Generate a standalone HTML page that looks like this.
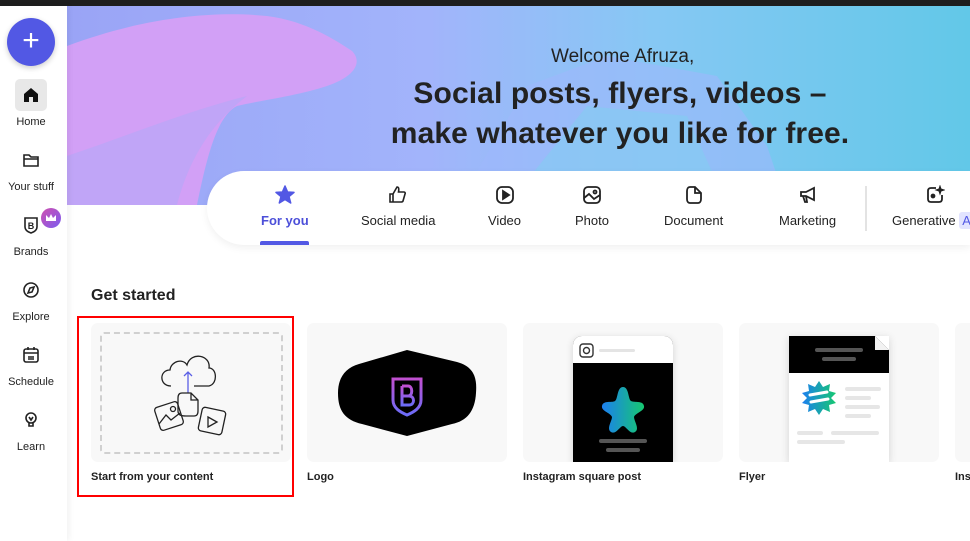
<!DOCTYPE html>
<html><head><meta charset="utf-8"><style>
*{margin:0;padding:0;box-sizing:border-box}
body{width:970px;height:541px;overflow:hidden;background:#fff;font-family:"Liberation Sans",sans-serif;color:#222;position:relative}
.top{position:absolute;left:0;top:0;width:970px;height:6px;background:#1e1e1e}
.side{position:absolute;left:0;top:6px;width:67px;height:535px;background:#fff;box-shadow:2px 0 6px rgba(0,0,0,.06);z-index:3}
.plus{position:absolute;left:7px;top:12px;width:48px;height:48px;border-radius:50%;background:#5258e4;color:#fff;font-size:30px;text-align:center;line-height:46px;box-shadow:0 2px 6px rgba(0,0,0,.2)}
.nav{position:absolute;left:0;width:62px;text-align:center;font-size:11px;color:#222}
.nav svg{display:block;margin:0 auto 12px}
.banner{position:absolute;left:67px;top:6px;width:903px;height:199px;overflow:hidden;background:linear-gradient(90deg,#9aa4f6 0%,#a2b4fb 40%,#86c8f4 65%,#62c8e8 100%)}
.tabs{position:absolute;left:207px;top:171px;width:763px;height:74px;background:#fff;border-radius:37px 0 0 37px;box-shadow:0 3px 8px rgba(0,0,0,.06);z-index:2}
.tab{position:absolute;top:14px;text-align:center;font-size:13px;color:#222;white-space:nowrap}
.tab svg{display:block;margin:0 auto 8px}
h2{position:absolute;left:91px;top:287px;font-size:16px;font-weight:bold;color:#222}
.card{position:absolute;top:323px;width:200px;height:139px;background:#f8f8f8;border-radius:7px;overflow:hidden}
.lab{position:absolute;top:471px;font-size:11px;font-weight:bold;color:#222}
</style></head><body>
<div class="top"></div>
<div class="banner">
<svg width="903" height="199" style="position:absolute;left:0;top:0">
<path d="M0 40 C80 10 150 5 200 10 C240 15 270 35 285 45 C295 55 290 70 260 80 C230 90 190 95 170 100 C150 110 140 150 130 199 L0 199 Z" fill="#d2a0f6"/>
<path d="M0 150 C60 130 120 105 180 90 C140 120 120 160 110 199 L0 199Z" fill="#b8a6f8" opacity=".7"/>
<path d="M390 199 L460 80 L540 50 L650 70 L700 140 L720 199Z" fill="#9fb8fb" opacity=".6"/>
<path d="M440 199 L520 100 L620 110 L660 199Z" fill="#7fd0ef" opacity=".5"/>
</svg>
<div style="position:absolute;left:484px;top:40px;font-size:19px;color:#222">Welcome Afruza,</div>
<div style="position:absolute;left:0;width:903px;padding-left:203px;top:68px;text-align:center;font-size:30px;font-weight:bold;line-height:40px;color:#222;letter-spacing:0.1px">Social posts, flyers, videos –<br>make whatever you like for free.</div>
</div>
<div class="side">
<div class="plus">+</div>
<div style="position:absolute;left:15px;top:73px;width:32px;height:32px;border-radius:5px;background:#e8e8e8"></div>
<div class="nav" style="top:80px"><svg width="18" height="18" viewBox="0 0 18 18"><path d="M2 8 L9 2 L16 8 V16 H11 V11 H7 V16 H2Z" fill="#111"/></svg><span>Home</span></div>
<div class="nav" style="top:145px"><svg width="18" height="18" viewBox="0 0 18 18" fill="none" stroke="#222" stroke-width="1.6"><path d="M2 4 H7 L9 6 H16 V15 H2Z M2 8 H16"/></svg><span>Your stuff</span></div>
<div class="nav" style="top:210px"><svg width="18" height="18" viewBox="0 0 18 18" fill="none" stroke="#222" stroke-width="1.6"><path d="M3 2 H15 V11 C15 14 12 16 9 17 C6 16 3 14 3 11Z"/><text x="9" y="13" font-size="9" text-anchor="middle" fill="#222" stroke="none" font-weight="bold">B</text></svg><span>Brands</span></div>
<div style="position:absolute;left:41px;top:202px;width:20px;height:20px;border-radius:50%;background:linear-gradient(135deg,#d04fb0,#7b5cf0);"><svg width="20" height="20"><path d="M5 13 L5 7 L8 10 L10 6 L12 10 L15 7 L15 13Z" fill="#fff"/></svg></div>
<div class="nav" style="top:275px"><svg width="18" height="18" viewBox="0 0 18 18" fill="none" stroke="#222" stroke-width="1.6"><circle cx="9" cy="9" r="7"/><path d="M6 12 L8 7 L12 6 L10 11Z"/></svg><span>Explore</span></div>
<div class="nav" style="top:340px"><svg width="18" height="18" viewBox="0 0 18 18" fill="none" stroke="#222" stroke-width="1.6"><rect x="2" y="3" width="14" height="13" rx="2"/><path d="M2 7 H16 M6 1 V4 M12 1 V4 M6 11 H12 M6 13 H12"/></svg><span>Schedule</span></div>
<div class="nav" style="top:405px"><svg width="18" height="18" viewBox="0 0 18 18" fill="none" stroke="#222" stroke-width="1.6"><circle cx="9" cy="7" r="5"/><path d="M7 12 V15 H11 V12 M7 6 L9 9 L11 6"/></svg><span>Learn</span></div>
</div>
<div class="tabs">
<div class="tab" style="left:54px;color:#4c4fd9;font-weight:bold"><svg width="20" height="20" viewBox="0 0 20 20"><path d="M10 1 L12.6 7 L19 7.4 L14 11.6 L15.7 18 L10 14.5 L4.3 18 L6 11.6 L1 7.4 L7.4 7Z" fill="#5258e4" stroke="#5258e4" stroke-linejoin="round" stroke-width="1.5"/></svg>For you</div>
<div style="position:absolute;left:53px;top:70px;width:49px;height:4px;border-radius:2px 2px 0 0;background:#5258e4"></div>
<div class="tab" style="left:154px"><svg width="20" height="20" viewBox="0 0 20 20" fill="none" stroke="#222" stroke-width="1.6"><path d="M2 9 H5 V17 H2Z M5 9 L9 2 C11 2 11 4 10.5 7 H16 C17 7 17.5 8 17 9 L15 16 C14.7 17 14 17 13 17 H5"/></svg>Social media</div>
<div class="tab" style="left:281px"><svg width="20" height="20" viewBox="0 0 20 20" fill="none" stroke="#222" stroke-width="1.8"><rect x="2" y="2" width="16" height="16" rx="5"/><path d="M8 6 V14 L14 10Z" fill="#222"/></svg>Video</div>
<div class="tab" style="left:368px"><svg width="20" height="20" viewBox="0 0 20 20" fill="none" stroke="#222" stroke-width="1.8"><rect x="2" y="2" width="16" height="16" rx="4"/><circle cx="13" cy="7" r="1.5"/><path d="M2 13 L7 9 L12 14 L18 10"/></svg>Photo</div>
<div class="tab" style="left:457px"><svg width="20" height="20" viewBox="0 0 20 20" fill="none" stroke="#222" stroke-width="1.8"><path d="M6 2 H11 L17 8 V14 C17 16 16 18 14 18 H6 C4 18 3 16 3 14 V6 C3 4 4 2 6 2Z M11 2 V8 H17"/></svg>Document</div>
<div class="tab" style="left:572px"><svg width="20" height="20" viewBox="0 0 20 20" fill="none" stroke="#222" stroke-width="1.8"><path d="M3 7 H8 L16 3 V15 L8 11 H3Z M5 11 L7 17 H9 L8 11"/></svg>Marketing</div>
<div style="position:absolute;left:658px;top:15px;width:2px;height:45px;background:#e3e3e3"></div>
<div class="tab" style="left:685px"><svg width="20" height="20" viewBox="0 0 20 20" fill="none" stroke="#222" stroke-width="1.8"><path d="M11 3 H6 C4 3 3 4 3 6 V14 C3 16 4 17 6 17 H14 C16 17 17 16 17 14 V10"/><path d="M15 1 L16 4 L19 5 L16 6 L15 9 L14 6 L11 5 L14 4Z" fill="#222" stroke-width="1"/><circle cx="8" cy="11" r="1.5" fill="#222"/></svg>Generative <span style="background:#e2e4ff;color:#5258e4;padding:1px 3px;border-radius:3px">AI</span></div>
</div>
<h2>Get started</h2>
<div style="position:absolute;left:77px;top:316px;width:217px;height:181px;border:2px solid #f00"></div>
<div class="card" style="left:91px">
<div style="position:absolute;left:9px;top:9px;width:183px;height:122px;border:2px dashed #d0d0d0;border-radius:4px"></div>
<svg width="200" height="139" style="position:absolute;left:0;top:0" fill="none" stroke="#222" stroke-width="1.3">
<path d="M80 63 C68 63 68 47 79 47 C80 38 92 35 96 42 C100 28 120 32 118 45 C126 45 127 61 118 63 L103 63"/>
<path d="M97 70 V49 M93 53 L97 49 L101 53" stroke="#5a5fe6"/>
<path d="M91 70 C88 70 87 72 87 75 V88 C87 92 90 93 95 93 H103 C106 93 107 91 107 88 V77 L100 70Z M100 70 V77 H107"/>
<rect x="66" y="81" width="24" height="24" rx="3" transform="rotate(-18 78 93)"/>
<circle cx="82" cy="86" r="2.5"/><path d="M68 101 L75 92 L80 97 L89 90"/>
<rect x="109" y="86" width="24" height="24" rx="3" transform="rotate(12 121 98)"/>
<path d="M117 94 L126 99 L117 104Z"/>
</svg></div>
<div class="lab" style="left:91px">Start from your content</div>
<div class="card" style="left:307px">
<svg width="200" height="139" style="position:absolute;left:0;top:0"><defs><linearGradient id="g1" x1="0" y1="0" x2="0" y2="1"><stop offset="0" stop-color="#c050d0"/><stop offset="1" stop-color="#6c6cf8"/></linearGradient></defs>
<path d="M100 27 L150 39 C168 44 170 56 169 70 C168 88 160 98 145 101 L100 113 L55 101 C38 97 31 88 31 70 C31 55 38 45 52 41Z" fill="#000"/>
<path d="M86 56 H114 V77 C114 85 107 89 100 92 C93 89 86 85 86 77Z" fill="none" stroke="url(#g1)" stroke-width="3"/>
<path d="M95 63 V82 H102 C108 82 108 73 102 73 H95 M95 63 H101 C106 63 106 73 101 73" fill="none" stroke="url(#g1)" stroke-width="3"/></svg></div>
<div class="lab" style="left:307px">Logo</div>
<div class="card" style="left:523px">
<div style="position:absolute;left:50px;top:13px;width:100px;height:126px;background:#000;border-radius:9px 9px 0 0;overflow:hidden;box-shadow:0 2px 8px rgba(0,0,0,.15)">
<div style="height:27px;background:#fff"><svg width="100" height="27"><rect x="7" y="8" width="13" height="13" rx="3" fill="none" stroke="#333" stroke-width="1.4"/><circle cx="13.5" cy="14.5" r="3" fill="none" stroke="#333" stroke-width="1.4"/><rect x="26" y="13" width="36" height="3" rx="1.5" fill="#e4e4e4"/></svg></div>
<svg width="100" height="100"><defs><linearGradient id="g2" x1="0" x2="1"><stop offset="0" stop-color="#1c7ff0"/><stop offset="1" stop-color="#16c870"/></linearGradient></defs>
<path d="M50 24 C56 24 55 36 58 38 C61 40 70 37 71 43 C72 48 62 50 61 54 C61 58 67 66 62 69 C57 72 53 63 50 63 C47 63 43 72 38 69 C33 66 39 58 39 54 C38 50 28 48 29 43 C30 37 39 40 42 38 C45 36 44 24 50 24Z" fill="url(#g2)"/>
<rect x="26" y="76" width="48" height="4" rx="2" fill="#555"/><rect x="33" y="85" width="34" height="4" rx="2" fill="#555"/></svg></div></div>
<div class="lab" style="left:523px">Instagram square post</div>
<div class="card" style="left:739px">
<div style="position:absolute;left:50px;top:13px;width:100px;height:126px;background:#fff;box-shadow:0 2px 8px rgba(0,0,0,.15)">
<div style="height:37px;background:#000"></div>
<svg width="100" height="126" style="position:absolute;left:0;top:0"><defs><linearGradient id="g3" x1="0" x2="1"><stop offset="0" stop-color="#1c7ff0"/><stop offset="1" stop-color="#16c870"/></linearGradient></defs>
<path d="M86 0 L100 14 H86Z" fill="#f2f2f2"/><path d="M86 0 L100 14 V0Z" fill="#fff"/>
<rect x="26" y="12" width="48" height="4" rx="2" fill="#555"/><rect x="33" y="21" width="34" height="4" rx="2" fill="#555"/>
<polygon points="30,45 34,51 41,48 40,55 47,57 42,62 47,67 40,69 41,76 34,73 30,79 26,73 19,76 20,69 13,67 18,62 13,57 20,55 19,48 26,51" fill="url(#g3)"/>
<path d="M21 59 L38 56 M22 66 L39 63" stroke="#fff" stroke-width="3" stroke-linecap="round"/>
<g fill="#e6e6e6"><rect x="56" y="51" width="36" height="4" rx="2"/><rect x="56" y="60" width="26" height="4" rx="2"/><rect x="56" y="69" width="35" height="4" rx="2"/><rect x="56" y="78" width="26" height="4" rx="2"/><rect x="8" y="95" width="26" height="4" rx="2"/><rect x="42" y="95" width="48" height="4" rx="2"/><rect x="8" y="104" width="48" height="4" rx="2"/></g></svg></div></div>
<div class="lab" style="left:739px">Flyer</div>
<div class="card" style="left:955px"></div>
<div class="lab" style="left:955px">Ins</div>
</body></html>
